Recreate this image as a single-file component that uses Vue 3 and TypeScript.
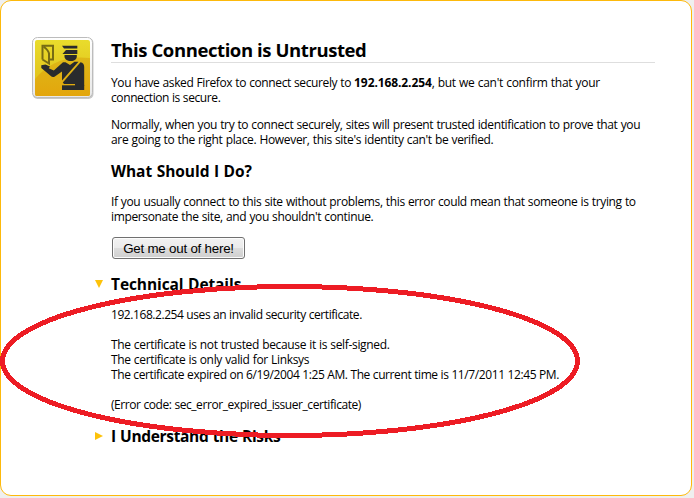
<script setup lang="ts">
interface Line {
  text: string
  fit: string
}
const intro: Line[] = [
  { text: 'Normally, when you try to connect securely, sites will present trusted identification to prove that you', fit: 'loose' },
  { text: "are going to the right place. However, this site's identity can't be verified.", fit: 'wide' },
]
const advice: Line[] = [
  { text: 'If you usually connect to this site without problems, this error could mean that someone is trying to', fit: 'loose' },
  { text: "impersonate the site, and you shouldn't continue.", fit: 'loose' },
]
const reasons: Line[] = [
  { text: 'The certificate is not trusted because it is self-signed.', fit: 'wide' },
  { text: 'The certificate is only valid for Linksys', fit: 'wide' },
  { text: 'The certificate expired on 6/19/2004 1:25 AM. The current time is 11/7/2011 12:45 PM.', fit: 'snug' },
]
</script>

<template>
  <div class="page">
    <main class="panel">
      <svg class="badge" width="64" height="64" viewBox="0 0 64 64">
        <defs>
          <linearGradient id="frame" x1="0" y1="0" x2="0" y2="1">
            <stop offset="0" stop-color="#ffffff" />
            <stop offset="1" stop-color="#e8e8e8" />
          </linearGradient>
          <linearGradient id="gold" x1="0" y1="0" x2="0" y2="1">
            <stop offset="0" stop-color="#e9dc2c" />
            <stop offset="1" stop-color="#dfb814" />
          </linearGradient>
          <linearGradient id="amber" x1="0" y1="0" x2="0" y2="1">
            <stop offset="0" stop-color="#deb817" />
            <stop offset="1" stop-color="#e3a60d" />
          </linearGradient>
        </defs>
        <rect x="1.5" y="2" width="61" height="61" rx="5" fill="#c9c9c9" />
        <rect x="1.5" y="1.5" width="60" height="60" rx="5" fill="url(#frame)" stroke="#bcbcbc" />
        <rect x="4" y="4" width="55" height="56" rx="2" fill="url(#gold)" />
        <path d="M4 43C17 27 35 19 59 22V58Q59 60 57 60H6Q4 60 4 58Z" fill="url(#amber)" />
        <path d="M11.5 23.5V9.8H22V23.5H19 M11.5 23.5L18 27.5V17.5Q17.5 14.5 13 11" fill="none" stroke="#766b14" stroke-width="2" />
        <g fill="#292b2d">
          <path d="M31 9.7H46.3V12.5H33Z" />
          <path d="M35 14H46.3V18H31.5Z" />
          <path d="M33.5 19H45.8V20.5C45.8 23 43.5 25 39.8 25S33.5 23 33.5 20.5Z" />
          <path d="M10.3 29.3L14.5 28.5L19 30.5L17.8 32.2L22.8 34.5L32 26.3H34.5L39 29L43.5 25.7H47.5L31 44.5V35.5L23.5 40.7Q21.5 41.7 19.5 39.8L10.3 32Z" />
          <path d="M49.5 26.2Q53.2 26.7 53.2 31V48H33L31.8 46.5Z" />
          <path d="M31 49.3H53.2V54H31Z" />
        </g>
        <path d="M44 49H53.2" stroke="#292b2d" stroke-width="2" />
      </svg>
      <div class="content">
        <h1>This Connection is Untrusted</h1>
        <p>
          <span class="line host">You have asked Firefox to connect securely to <b>192.168.2.254</b><span class="rest">, but we can't confirm that your</span></span>
          <span class="line">connection is secure.</span>
        </p>
        <p><span v-for="l in intro" :key="l.text" class="line" :class="l.fit">{{ l.text }}</span></p>
        <h2 class="what">What Should I Do?</h2>
        <p><span v-for="l in advice" :key="l.text" class="line" :class="l.fit">{{ l.text }}</span></p>
        <button type="button">Get me out of here!</button>
        <h2 class="toggle technical"><i class="arrow down"></i>Technical Details</h2>
        <div class="details">
          <p><span class="line tight">192.168.2.254 uses an invalid security certificate.</span></p>
          <p><span v-for="l in reasons" :key="l.text" class="line" :class="l.fit">{{ l.text }}</span></p>
          <p><span class="line tight">(Error code: sec_error_expired_issuer_certificate)</span></p>
        </div>
        <h2 class="toggle risks"><i class="arrow right"></i>I Understand the Risks</h2>
      </div>
    </main>
    <svg class="mark" width="694" height="498" viewBox="0 0 694 498" shape-rendering="crispEdges">
      <ellipse cx="290" cy="361" rx="287.5" ry="74.5" fill="none" stroke="#ed1c24" stroke-width="5" />
    </svg>
  </div>
</template>

<style>
body {
  margin: 0;
  background: #efefef;
}
</style>

<style scoped>
.page {
  position: relative;
  width: 694px;
  height: 498px;
  overflow: hidden;
  font-family: "Open Sans", "Noto Sans", sans-serif;
  font-size: 12px;
  line-height: 15px;
  color: #000;
}
.panel {
  box-sizing: border-box;
  display: flex;
  width: 692px;
  height: 496px;
  padding: 35px 36px 0 30px;
  border: 1px solid #fdb90b;
  border-radius: 11px;
  background: #fff;
}
.badge {
  flex: none;
  margin-right: 16px;
}
.content {
  width: 545px;
}
h1 {
  box-sizing: border-box;
  height: 27px;
  margin: 0 0 12px;
  border-bottom: 1px solid #dedede;
  font-size: 18.5px;
  line-height: 27px;
  letter-spacing: -0.41px;
  white-space: nowrap;
}
p {
  margin: 0 0 12px;
}
.line {
  display: block;
  white-space: nowrap;
  letter-spacing: -0.4px;
  word-spacing: 0.2px;
}
.loose {
  letter-spacing: -0.36px;
  word-spacing: 0.4px;
}
.wide {
  letter-spacing: -0.34px;
  word-spacing: 0.4px;
}
.host {
  letter-spacing: -0.39px;
  word-spacing: 0.4px;
}
.host b {
  letter-spacing: -0.1px;
}
.rest {
  letter-spacing: -0.29px;
}
.snug {
  letter-spacing: -0.4px;
  word-spacing: 0.15px;
}
.tight {
  letter-spacing: -0.43px;
}
h2 {
  margin: 0;
  font-size: 15.5px;
  line-height: 20px;
  letter-spacing: -0.25px;
  word-spacing: 0.6px;
  white-space: nowrap;
}
.what {
  margin: 14px 0 13px;
  letter-spacing: -0.05px;
}
.technical {
  letter-spacing: -0.09px;
}
button {
  display: block;
  box-sizing: border-box;
  width: 133px;
  height: 22px;
  margin: 13px 0 15px 1px;
  padding: 0;
  border: 1px solid #707070;
  border-radius: 3px;
  background: linear-gradient(#f2f2f2 0%, #ebebeb 49%, #dddddd 50%, #cfcfcf 100%);
  box-shadow: inset 0 0 0 1px #fcfcfc;
  font-family: "Liberation Sans", sans-serif;
  font-size: 13.33px;
  line-height: 21px;
  letter-spacing: -0.22px;
  color: #000;
}
.toggle {
  display: flex;
  align-items: center;
  margin-left: -16px;
}
.risks {
  letter-spacing: -0.34px;
}
.arrow {
  flex: none;
  width: 16px;
  height: 8px;
}
.arrow::before {
  content: "";
  display: block;
  width: 8px;
  height: 8px;
  background: #fdc20a;
}
.down::before {
  clip-path: polygon(0 0, 100% 0, 50% 100%);
}
.right::before {
  clip-path: polygon(0 0, 100% 50%, 0 100%);
}
.details {
  margin: 13px 0 0;
}
.details p {
  margin-bottom: 15px;
}
.details p:last-child {
  margin-bottom: 14px;
}
.mark {
  position: absolute;
  left: 0;
  top: 0;
  pointer-events: none;
}
</style>
